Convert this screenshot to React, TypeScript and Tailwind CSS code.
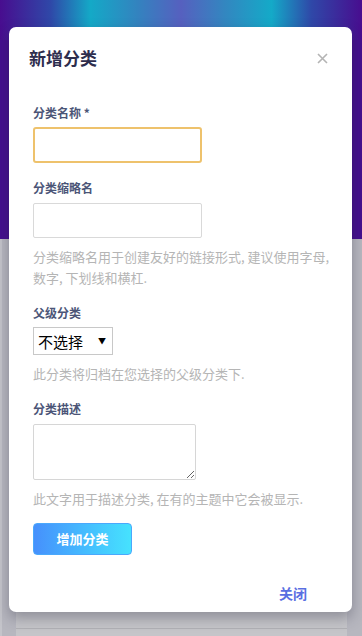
const cjk = "font-['Noto_Sans_CJK_SC',_'Noto_Sans',_sans-serif]";

function Field({ label, children }: { label: string; children: React.ReactNode }) {
  return (
    <div className="mt-4 first:mt-0">
      <div className="h-[18px] text-[12px] leading-[18px] font-semibold text-[#4b5577]">{label}</div>
      {children}
    </div>
  );
}

function Help({ text }: { text: string }) {
  return <p className="mt-2 text-[13px] leading-[21px] text-[#b5b5b5]">{text}</p>;
}

export default function App() {
  return (
    <div className={`relative w-[362px] h-[636px] overflow-hidden bg-[#b7b7bf] ${cjk}`}>
      {/* page behind the overlay */}
      <div className="h-[239px] bg-[#440f8e]">
        <div className="h-[40px] bg-[linear-gradient(90deg,#480d8f_0%,#2f48a8_14%,#14a9c7_25%,#3383bf_38%,#5660bf_50%,#3386c0_62%,#14aac8_75%,#2f48a8_86%,#480d8f_100%)]" />
      </div>
      <div className="flex h-[397px]">
        <div className="w-[2px] bg-[#c4c4ca]" />
        <div className="ml-[14px] mt-[12px] w-[331px] bg-[#c5c5c9] flex flex-col">
          <div className="h-[378px] border-b border-[#b1b1b5]" />
        </div>
      </div>

      {/* modal */}
      <div className="absolute left-[9px] top-[27px] w-[343px] h-[585px] bg-white rounded-[7px] shadow-[0_6px_14px_rgba(40,40,60,0.35)] flex flex-col">
        <div className="h-[62px] flex items-center justify-between pl-5 pr-[24px]">
          <h2 className="text-[17px] font-bold text-[#2d2d4d]">新增分类</h2>
          <svg width="11" height="11" viewBox="0 0 11 11" className="text-[#b4b4b4]">
            <path d="M1 1L10 10M10 1L1 10" stroke="currentColor" strokeWidth="1.6" />
          </svg>
        </div>

        <div className="pl-6 pr-[20px] pt-[15px]">
          <Field label="分类名称 *">
            <input className="mt-[5px] block w-[169px] h-[36px] border-2 border-[#eec26c] rounded-[3px] outline-none" />
          </Field>
          <Field label="分类缩略名">
            <input className="mt-[6px] block w-[169px] h-[35px] border border-[#d9d9d9] rounded-[2px] outline-none" />
            <Help text="分类缩略名用于创建友好的链接形式, 建议使用字母, 数字, 下划线和横杠." />
          </Field>
          <Field label="父级分类">
            <div className="mt-[5px] w-[80px] h-[28px] border border-[#c8c8c8] flex items-center justify-between pl-[4px] pr-[6px]">
              <span className="text-[15px] text-black leading-none">不选择</span>
              <span className="text-[8px] text-black leading-none">▼</span>
            </div>
            <Help text="此分类将归档在您选择的父级分类下." />
          </Field>
          <Field label="分类描述">
            <textarea className="mt-[6px] block w-[163px] h-[56px] border border-[#d6d6d6] rounded-[2px] outline-none" />
            <Help text="此文字用于描述分类, 在有的主题中它会被显示." />
          </Field>
          <button className="mt-[14px] w-[99px] h-[32px] rounded-[4px] border border-[#4aa8fc] bg-gradient-to-r from-[#4690fc] to-[#46e2fe] text-white text-[13px] font-bold">
            增加分类
          </button>
        </div>

        <div className="mt-auto pb-[9px] pr-[45px] flex justify-end">
          <span className="text-[14px] leading-[20px] font-semibold text-[#5a6fe2]">关闭</span>
        </div>
      </div>
    </div>
  );
}
